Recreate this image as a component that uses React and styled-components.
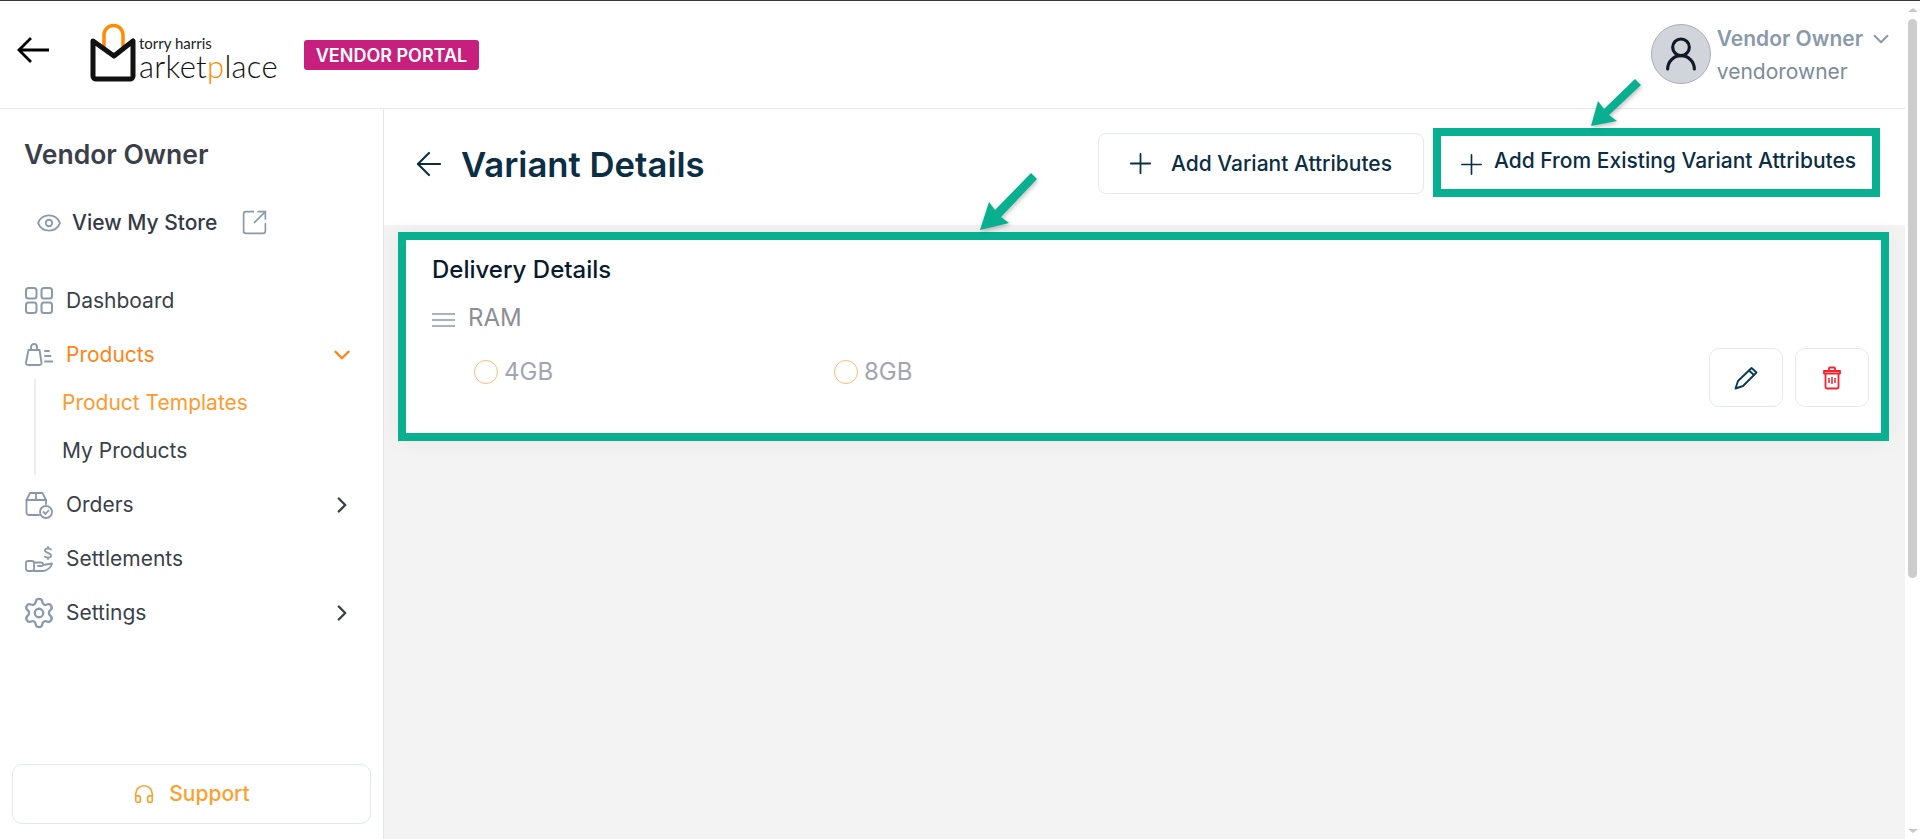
import React from "react";
import styled, { createGlobalStyle } from "styled-components";
import { ArrowLeft, ChevronDown, ChevronRight, Eye, Plus, SquareArrowOutUpRight, Headphones, Settings, UserRound } from "lucide-react";

const GlobalStyle = createGlobalStyle`
  html, body {
    margin: 0;
    padding: 0;
    height: 100%;
    overflow: hidden;
    background: #fff;
    font-family: Inter, "Liberation Sans", sans-serif;
  }
  * {
    box-sizing: border-box;
  }
`;

const green = "#08b090";
const slate = "#8a9aab";

const Page = styled.div`
  position: relative;
  width: 1920px;
  height: 839px;
  border-top: 1px solid #3a3545;
  display: flex;
  overflow: hidden;
`;

const Frame = styled.div`
  flex: 1;
  min-width: 0;
  display: flex;
  flex-direction: column;
`;

const ScrollRail = styled.div`
  width: 15px;
  padding: 7px 3px 6px;
  background: #fff;
  display: flex;
  flex-direction: column;
  align-items: center;
`;

const RailArrow = styled.div`
  width: 0;
  height: 0;
  border-left: 5px solid transparent;
  border-right: 5px solid transparent;
  ${(p) => (p.$down ? "border-top: 4px solid #c8c8c8; margin-top: auto;" : "border-bottom: 4px solid #c8c8c8;")}
`;

const ScrollThumb = styled.div`
  width: 9px;
  height: 559px;
  margin-top: 7px;
  background: #cdcdcd;
  border-radius: 5px;
`;

const TopBar = styled.header`
  height: 108px;
  flex: none;
  display: flex;
  align-items: center;
  border-bottom: 1px solid #e3e8ef;
  padding: 0 11px 0 17px;
`;

const BackButton = styled.div`
  display: flex;
  width: 32px;
  margin-top: -9px;
  color: #000;
`;

const Logo = styled.div`
  width: 190px;
  height: 62px;
  margin: -8px 0 0 41px;
  flex: none;
  display: flex;
`;

const LogoText = styled.div`
  margin: 15px 0 0 1px;
  display: flex;
  flex-direction: column;
`;

const LogoTop = styled.span`
  font: 400 15px/16px "Lato", sans-serif;
  color: #222;
`;

const LogoWord = styled.span`
  font: 300 31px/30px "Lato", sans-serif;
  letter-spacing: 0.3px;
  color: #111;
  span {
    color: #ff8c00;
  }
`;

const Badge = styled.div`
  margin: 1px 0 0 24px;
  width: 175px;
  height: 30px;
  background: #c71f7d;
  border-radius: 3px;
  color: #fff;
  font-size: 18px;
  font-weight: 600;
  display: flex;
  align-items: center;
  justify-content: center;
`;

const UserArea = styled.div`
  margin-left: auto;
  display: flex;
  align-items: center;
  gap: 6px;
`;

const Avatar = styled.div`
  width: 60px;
  height: 60px;
  margin-top: -2px;
  border-radius: 50%;
  background: #d1d5db;
  border: 1px solid #a8adb5;
  color: #111827;
  display: flex;
  align-items: center;
  justify-content: center;
`;

const UserText = styled.div`
  display: flex;
  flex-direction: column;
  gap: 8px;
`;

const UserName = styled.div`
  display: flex;
  align-items: center;
  gap: 5px;
  font-size: 21px;
  line-height: 24px;
  font-weight: 600;
  color: ${slate};
`;

const UserLogin = styled.div`
  font-size: 21px;
  line-height: 24px;
  color: #7c8b9a;
`;

const Body = styled.div`
  flex: 1;
  min-height: 0;
  display: flex;
`;

const Sidebar = styled.aside`
  width: 384px;
  flex: none;
  border-right: 1px solid #e3e8ef;
  display: flex;
  flex-direction: column;
  padding: 0 12px 15px;
`;

const VendorName = styled.div`
  margin: 29px 0 0 12px;
  font-size: 26.500px;
  line-height: 32px;
  font-weight: 600;
  color: #3b3f4a;
`;

const StoreLink = styled.div`
  margin: 38px 0 0 24px;
  display: flex;
  align-items: center;
  font-size: 21px;
  line-height: 24px;
  font-weight: 500;
  color: #363a45;
  svg {
    color: ${slate};
  }
  span {
    margin: 0 23px 0 10px;
  }
`;

const Nav = styled.nav`
  margin-top: 36.500px;
  display: flex;
  flex-direction: column;
`;

const NavRow = styled.div`
  height: 54px;
  padding-left: 13px;
  display: flex;
  align-items: center;
  gap: 13px;
  font-size: 21px;
  color: ${(p) => (p.$active ? "#ff8412" : "#3b3f4a")};
  > svg {
    margin-left: auto;
    margin-right: 16px;
    color: ${(p) => (p.$active ? "#ff8412" : "#3b3f4a")};
  }
`;

const NavIcon = styled.span`
  width: 28px;
  flex: none;
  display: flex;
  justify-content: center;
  color: ${slate};
`;

const SubNav = styled.div`
  margin: -3px 0 3px 22px;
  border-left: 2px solid #eceef1;
  display: flex;
  flex-direction: column;
`;

const SubLink = styled.div`
  height: 48px;
  padding-left: 26px;
  display: flex;
  align-items: center;
  font-size: 21px;
  color: ${(p) => (p.$active ? "#ff9a2e" : "#3b3f4a")};
`;

const SupportButton = styled.div`
  margin-top: auto;
  height: 60px;
  padding-bottom: 1px;
  border: 1px solid #e3e8ef;
  border-radius: 10px;
  color: #ff9f2e;
  font-size: 21px;
  font-weight: 500;
  display: flex;
  align-items: center;
  justify-content: center;
  gap: 14px;
`;

const Content = styled.main`
  flex: 1;
  min-width: 0;
  display: flex;
  flex-direction: column;
  background: #f3f3f3;
`;

const ContentHead = styled.div`
  height: 116px;
  flex: none;
  background: #fff;
  display: flex;
  align-items: flex-start;
  padding: 19px 25px 0 26px;
`;

const Title = styled.h1`
  margin: 16px 0 0;
  display: flex;
  align-items: center;
  gap: 13px;
  font-size: 34.700px;
  line-height: 40px;
  font-weight: 600;
  color: #0b2e44;
`;

const Actions = styled.div`
  margin-left: auto;
  display: flex;
  align-items: flex-start;
  gap: 9px;
`;

const OutlineButton = styled.div`
  margin-top: 5px;
  height: 61px;
  width: 326px;
  padding-left: 25px;
  border: 1px solid #e6e9f2;
  border-radius: 8px;
  display: flex;
  align-items: center;
  gap: 14px;
  font-size: 21px;
  font-weight: 500;
  color: #0b2e44;
`;

const HighlightButton = styled.div`
  height: 69px;
  width: 447px;
  border: 8px solid ${green};
  background: #fff;
  padding-left: 14px;
  display: flex;
  align-items: center;
  gap: 6px;
  font-size: 21px;
  font-weight: 500;
  white-space: nowrap;
  color: #0b2e44;
  svg {
    flex: none;
    margin-top: 3px;
  }
  span {
    margin-top: -5px;
  }
`;

const Card = styled.section`
  margin: 7px 16px 0 14px;
  height: 209px;
  flex: none;
  border: 8px solid ${green};
  background: #fff;
  box-shadow: 0 0 20px rgba(0, 0, 0, 0.05);
  padding: 15px 12px 0 26px;
  display: flex;
  flex-direction: column;
`;

const CardTitle = styled.div`
  font-size: 24px;
  line-height: 30px;
  font-weight: 500;
  color: #0a1a2e;
`;

const AttrRow = styled.div`
  margin-top: 18px;
  display: flex;
  align-items: center;
  gap: 13px;
  font-size: 24px;
  line-height: 30px;
  color: #8e8e96;
  svg {
    margin-top: 4px;
  }
`;

const Options = styled.div`
  display: flex;
  justify-content: space-between;
  align-items: flex-start;
`;

const OptionList = styled.div`
  display: flex;
  margin: 24px 0 0 42px;
`;

const Option = styled.label`
  width: 360px;
  display: flex;
  align-items: center;
  gap: 6px;
  font-size: 24px;
  line-height: 29px;
  color: #a3a5b0;
`;

const Radio = styled.span`
  width: 24px;
  height: 24px;
  border-radius: 50%;
  border: 1px solid #f9bd78;
  flex: none;
`;

const CardActions = styled.div`
  margin-top: 15px;
  display: flex;
  gap: 12px;
`;

const IconButton = styled.div`
  width: 74px;
  height: 59px;
  border: 1px solid #e6e9f2;
  border-radius: 10px;
  display: flex;
  align-items: center;
  justify-content: center;
`;

const Callout = styled.svg`
  position: absolute;
  left: ${(p) => p.$x}px;
  top: ${(p) => p.$y}px;
  filter: drop-shadow(1px 2px 2px rgba(0, 0, 0, 0.25));
`;

const BackArrow = () => (
  <svg width="32" height="28" viewBox="0 0 32 28" fill="none" stroke="currentColor" strokeWidth="2.800">
    <path d="M32 14H2M14 2 2 14l12 12" />
  </svg>
);

const GridIcon = () => (
  <svg width="28" height="27" viewBox="0 0 28 27" fill="none" stroke="currentColor" strokeWidth="2">
    <rect x="1" y="1" width="10.500" height="10.500" rx="2.500" />
    <rect x="16.500" y="1" width="10.500" height="10.500" rx="2.500" />
    <rect x="1" y="15.500" width="10.500" height="10.500" rx="2.500" />
    <rect x="16.500" y="15.500" width="10.500" height="10.500" rx="2.500" />
  </svg>
);

const BagIcon = () => (
  <svg width="28" height="23" viewBox="0 0 28 23" fill="none" stroke="currentColor" strokeWidth="1.900" strokeLinecap="round" strokeLinejoin="round">
    <path d="M3.500 7h11l2 12.500a2 2 0 0 1-2 2.500h-11.500a2 2 0 0 1-2-2.500Z" />
    <path d="M6 7V4a3 3 0 0 1 6 0v3" />
    <path d="M20 8h4M20 13h5.500M20 18.500h7.500" />
  </svg>
);

const OrdersIcon = () => (
  <svg width="28" height="28" viewBox="0 0 28 28" fill="none" stroke="currentColor" strokeWidth="1.800" strokeLinecap="round" strokeLinejoin="round">
    <path d="M14 24H4a2.500 2.500 0 0 1-2.500-2.500V9L5 2h12.500L21 9v4" />
    <path d="M1.500 9H21M11 2v7" />
    <circle cx="21" cy="21" r="6" />
    <path d="m18.500 21 2 2 3-3.500" />
  </svg>
);

const HandIcon = () => (
  <svg width="28" height="26" viewBox="0 0 28 26" fill="none" stroke="currentColor" strokeWidth="1.800" strokeLinecap="round" strokeLinejoin="round">
    <rect x="1" y="15" width="8" height="10" rx="2" />
    <path d="M9 16.500h7c1.500 0 2 1 2 2s-1 1.500-2 1.500h-3M18 19l9-1.500c0 3-5 7.500-9 7.500H9" />
    <path d="M26 3.500C25 2 20 1.800 20 4.500S26 6.500 26 9.500s-5 2.500-6 1M23 1v1.500M23 11.500V13" />
  </svg>
);

const PencilIcon = () => (
  <svg width="24" height="24" viewBox="0 0 24 24" fill="none" stroke="#0b3a54" strokeWidth="1.900" strokeLinejoin="round">
    <path d="M1.500 22.500 4 15 17.500 2 22.500 6.500 9 20Z" />
    <path d="M15 4.500 20 9" />
  </svg>
);

const TrashIcon = () => (
  <svg width="18" height="24" viewBox="0 0 18 24" fill="none" stroke="#f5222d" strokeWidth="1.800" strokeLinejoin="round">
    <path d="M1 5h16v2.500H1ZM6 5V2.500a1 1 0 0 1 1-1h4a1 1 0 0 1 1 1V5" />
    <path d="M2.500 7.500V21a1.500 1.500 0 0 0 1.500 1.500h10a1.500 1.500 0 0 0 1.500-1.500V7.500" />
    <path d="M6 12v5M9 11v7M12 12v5" strokeWidth="1.500" />
  </svg>
);

const BrandMark = () => (
  <svg width="48" height="62" viewBox="0 0 48 62" fill="none">
    <path d="M14 30V15a9.500 9.500 0 0 1 19 0v15" stroke="#ff8c00" strokeWidth="3.500" />
    <path d="M3 21 24 36 43 21V56a3 3 0 0 1-3 3H6a3 3 0 0 1-3-3Z" stroke="#111" strokeWidth="5" strokeLinejoin="round" />
  </svg>
);

const App = () => {
  return (
    <Page>
      <GlobalStyle />
      <Frame>
        <TopBar>
          <BackButton>
            <BackArrow />
          </BackButton>
          <Logo>
            <BrandMark />
            <LogoText>
              <LogoTop>torry harris</LogoTop>
              <LogoWord>
                arket<span>p</span>lace
              </LogoWord>
            </LogoText>
          </Logo>
          <Badge>VENDOR PORTAL</Badge>
          <UserArea>
            <Avatar>
              <UserRound size={40} strokeWidth={1.9} />
            </Avatar>
            <UserText>
              <UserName>
                Vendor Owner
                <ChevronDown size={26} strokeWidth={1.8} />
              </UserName>
              <UserLogin>vendorowner</UserLogin>
            </UserText>
          </UserArea>
        </TopBar>
        <Body>
          <Sidebar>
            <VendorName>Vendor Owner</VendorName>
            <StoreLink>
              <Eye size={26} strokeWidth={1.7} />
              <span>View My Store</span>
              <SquareArrowOutUpRight size={29} strokeWidth={1.4} />
            </StoreLink>
            <Nav>
              <NavRow>
                <NavIcon>
                  <GridIcon />
                </NavIcon>
                Dashboard
              </NavRow>
              <NavRow $active>
                <NavIcon>
                  <BagIcon />
                </NavIcon>
                Products
                <ChevronDown size={26} strokeWidth={2.2} />
              </NavRow>
              <SubNav>
                <SubLink $active>Product Templates</SubLink>
                <SubLink>My Products</SubLink>
              </SubNav>
              <NavRow>
                <NavIcon>
                  <OrdersIcon />
                </NavIcon>
                Orders
                <ChevronRight size={26} strokeWidth={2.2} />
              </NavRow>
              <NavRow>
                <NavIcon>
                  <HandIcon />
                </NavIcon>
                Settlements
              </NavRow>
              <NavRow>
                <NavIcon>
                  <Settings size={34} strokeWidth={1.6} style={{ flex: "none" }} />
                </NavIcon>
                Settings
                <ChevronRight size={26} strokeWidth={2.2} />
              </NavRow>
            </Nav>
            <SupportButton>
              <Headphones size={22} strokeWidth={1.8} />
              Support
            </SupportButton>
          </Sidebar>
          <Content>
            <ContentHead>
              <Title>
                <ArrowLeft size={38} strokeWidth={1.3} />
                Variant Details
              </Title>
              <Actions>
                <OutlineButton>
                  <Plus size={33} strokeWidth={1.3} />
                  Add Variant Attributes
                </OutlineButton>
                <HighlightButton>
                  <Plus size={33} strokeWidth={1.2} />
                  <span>Add From Existing Variant Attributes</span>
                </HighlightButton>
              </Actions>
            </ContentHead>
            <Card>
              <CardTitle>Delivery Details</CardTitle>
              <AttrRow>
                <svg width="23" height="16" viewBox="0 0 23 16" stroke={slate} strokeWidth="1.700">
                  <path d="M0 2h23M0 8h23M0 14h23" />
                </svg>
                RAM
              </AttrRow>
              <Options>
                <OptionList>
                  <Option>
                    <Radio />
                    4GB
                  </Option>
                  <Option>
                    <Radio />
                    8GB
                  </Option>
                </OptionList>
                <CardActions>
                  <IconButton>
                    <PencilIcon />
                  </IconButton>
                  <IconButton>
                    <TrashIcon />
                  </IconButton>
                </CardActions>
              </Options>
            </Card>
          </Content>
        </Body>
      </Frame>
      <ScrollRail>
        <RailArrow />
        <ScrollThumb />
        <RailArrow $down />
      </ScrollRail>
      <Callout $x={1585} $y={72} width="60" height="60" viewBox="0 0 60 60">
        <path d="M50 6 56 12 24 42 32 48 6 53 13 28 19 36Z" fill={green} />
      </Callout>
      <Callout $x={974} $y={166} width="70" height="70" viewBox="0 0 70 70">
        <path d="M57 6 63 12 27 50 35 56 6 63 15 35 21 43Z" fill={green} />
      </Callout>
    </Page>
  );
};

export default App;
